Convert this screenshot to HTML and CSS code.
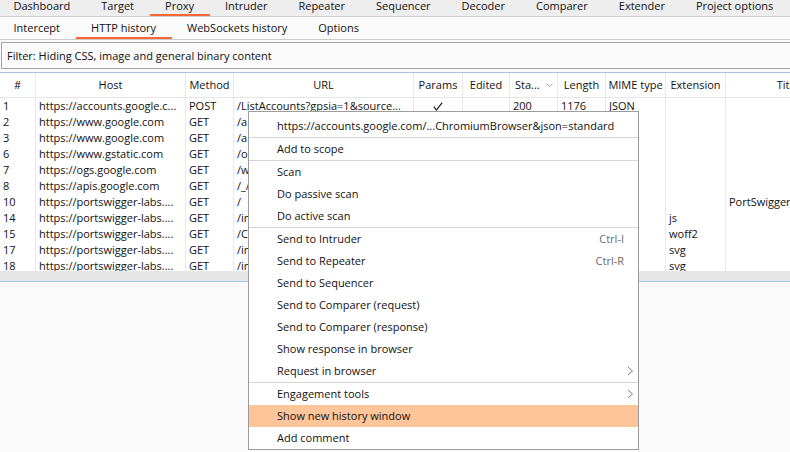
FILE: index.html
```html
<!DOCTYPE html>
<html>
<head>
<meta charset="utf-8">
<title>Proxy - HTTP history</title>
<link rel="stylesheet" href="styles.css">
</head>
<body>
<div class="app">
  <nav class="tabs main-tabs">
    <span class="tab">Dashboard</span>
    <span class="tab">Target</span>
    <span class="tab active">Proxy</span>
    <span class="tab">Intruder</span>
    <span class="tab">Repeater</span>
    <span class="tab">Sequencer</span>
    <span class="tab">Decoder</span>
    <span class="tab">Comparer</span>
    <span class="tab">Extender</span>
    <span class="tab">Project options</span>
  </nav>
  <nav class="tabs sub-tabs">
    <span class="tab">Intercept</span>
    <span class="tab active">HTTP history</span>
    <span class="tab">WebSockets history</span>
    <span class="tab">Options</span>
  </nav>
  <div class="filter">Filter: Hiding CSS, image and general binary content</div>
  <div class="history">
    <div class="row head">
      <div class="cell">#</div>
      <div class="cell">Host</div>
      <div class="cell">Method</div>
      <div class="cell">URL</div>
      <div class="cell">Params</div>
      <div class="cell">Edited</div>
      <div class="cell sorted"><span>Sta...</span><svg class="sort" width="7" height="4" viewBox="0 0 7 4"><path d="M0.5 0.5 L3.5 3.5 L6.5 0.5" fill="none" stroke="#a8a8a8" stroke-width="1"/></svg></div>
      <div class="cell">Length</div>
      <div class="cell">MIME type</div>
      <div class="cell">Extension</div>
      <div class="cell">Title</div>
    </div>
    <div class="row">
      <div class="cell">1</div><div class="cell">https://accounts.google.c...</div><div class="cell">POST</div><div class="cell">/ListAccounts?gpsia=1&amp;source...</div>
      <div class="cell check"><svg width="10" height="9" viewBox="0 0 10 9"><path d="M0.8 4.6 L3.4 8 L9.2 0.6" fill="none" stroke="#1a1a1a" stroke-width="1.2"/></svg></div>
      <div class="cell"></div><div class="cell">200</div><div class="cell">1176</div><div class="cell">JSON</div><div class="cell"></div><div class="cell"></div>
    </div>
    <div class="row">
      <div class="cell">2</div><div class="cell">https://www.google.com</div><div class="cell">GET</div><div class="cell">/a</div>
      <div class="cell"></div><div class="cell"></div><div class="cell"></div><div class="cell"></div><div class="cell"></div><div class="cell"></div><div class="cell"></div>
    </div>
    <div class="row">
      <div class="cell">3</div><div class="cell">https://www.google.com</div><div class="cell">GET</div><div class="cell">/a</div>
      <div class="cell"></div><div class="cell"></div><div class="cell"></div><div class="cell"></div><div class="cell"></div><div class="cell"></div><div class="cell"></div>
    </div>
    <div class="row">
      <div class="cell">6</div><div class="cell">https://www.gstatic.com</div><div class="cell">GET</div><div class="cell">/o</div>
      <div class="cell"></div><div class="cell"></div><div class="cell"></div><div class="cell"></div><div class="cell"></div><div class="cell"></div><div class="cell"></div>
    </div>
    <div class="row">
      <div class="cell">7</div><div class="cell">https://ogs.google.com</div><div class="cell">GET</div><div class="cell">/w</div>
      <div class="cell"></div><div class="cell"></div><div class="cell"></div><div class="cell"></div><div class="cell"></div><div class="cell"></div><div class="cell"></div>
    </div>
    <div class="row">
      <div class="cell">8</div><div class="cell">https://apis.google.com</div><div class="cell">GET</div><div class="cell">/_/</div>
      <div class="cell"></div><div class="cell"></div><div class="cell"></div><div class="cell"></div><div class="cell"></div><div class="cell"></div><div class="cell"></div>
    </div>
    <div class="row">
      <div class="cell">10</div><div class="cell">https://portswigger-labs....</div><div class="cell">GET</div><div class="cell">/</div>
      <div class="cell"></div><div class="cell"></div><div class="cell"></div><div class="cell"></div><div class="cell"></div><div class="cell"></div><div class="cell">PortSwigger Labs</div>
    </div>
    <div class="row">
      <div class="cell">14</div><div class="cell">https://portswigger-labs....</div><div class="cell">GET</div><div class="cell">/im</div>
      <div class="cell"></div><div class="cell"></div><div class="cell"></div><div class="cell"></div><div class="cell"></div><div class="cell">js</div><div class="cell"></div>
    </div>
    <div class="row">
      <div class="cell">15</div><div class="cell">https://portswigger-labs....</div><div class="cell">GET</div><div class="cell">/C</div>
      <div class="cell"></div><div class="cell"></div><div class="cell"></div><div class="cell"></div><div class="cell"></div><div class="cell">woff2</div><div class="cell"></div>
    </div>
    <div class="row">
      <div class="cell">17</div><div class="cell">https://portswigger-labs....</div><div class="cell">GET</div><div class="cell">/im</div>
      <div class="cell"></div><div class="cell"></div><div class="cell"></div><div class="cell"></div><div class="cell"></div><div class="cell">svg</div><div class="cell"></div>
    </div>
    <div class="row">
      <div class="cell">18</div><div class="cell">https://portswigger-labs....</div><div class="cell">GET</div><div class="cell">/im</div>
      <div class="cell"></div><div class="cell"></div><div class="cell"></div><div class="cell"></div><div class="cell"></div><div class="cell">svg</div><div class="cell"></div>
    </div>
  </div>
  <div class="hscroll"></div>
  <div class="lower"></div>

  <div class="menu">
    <div class="item"><span class="label">https://accounts.google.com/...ChromiumBrowser&amp;json=standard</span></div>
    <div class="sep"></div>
    <div class="item"><span class="label">Add to scope</span></div>
    <div class="sep"></div>
    <div class="item"><span class="label">Scan</span></div>
    <div class="item"><span class="label">Do passive scan</span></div>
    <div class="item"><span class="label">Do active scan</span></div>
    <div class="sep"></div>
    <div class="item"><span class="label">Send to Intruder</span><span class="key">Ctrl-I</span></div>
    <div class="item"><span class="label">Send to Repeater</span><span class="key">Ctrl-R</span></div>
    <div class="item"><span class="label">Send to Sequencer</span></div>
    <div class="item"><span class="label">Send to Comparer (request)</span></div>
    <div class="item"><span class="label">Send to Comparer (response)</span></div>
    <div class="item"><span class="label">Show response in browser</span></div>
    <div class="item"><span class="label">Request in browser</span><svg class="arrow" width="12" height="10" viewBox="0 0 12 10"><path d="M4 1 L8.5 5 L4 9" fill="none" stroke="#7a7a7a" stroke-width="1"/></svg></div>
    <div class="sep"></div>
    <div class="item"><span class="label">Engagement tools</span><svg class="arrow" width="12" height="10" viewBox="0 0 12 10"><path d="M4 1 L8.5 5 L4 9" fill="none" stroke="#7a7a7a" stroke-width="1"/></svg></div>
    <div class="item hot"><span class="label">Show new history window</span></div>
    <div class="item"><span class="label">Add comment</span></div>
  </div>
</div>
</body>
</html>
```
FILE: styles.css
```css
* { box-sizing: border-box; }
html, body { margin: 0; padding: 0; }
body {
  width: 790px;
  height: 452px;
  overflow: hidden;
  background: #fafafa;
  font-family: "Open Sans", "Noto Sans", sans-serif;
  font-size: 11px;
  color: #111;
}
.app {
  position: relative;
  width: 860px;
  height: 452px;
  display: flex;
  flex-direction: column;
}
.tabs { display: flex; margin-left: -2px; }
.tab { white-space: nowrap; padding: 0 16px; }

.main-tabs {
  height: 17px;
  background: #eeeeee;
  border-bottom: 1px solid #d3d3d3;
}
.main-tabs .tab { height: 16px; line-height: 11px; padding: 0 15.5px; }
.main-tabs .tab.active { border-bottom: 2px solid #ff6633; }

.sub-tabs {
  height: 23px;
  background: #fafafa;
  border-bottom: 1px solid #cbcbcb;
}
.sub-tabs .tab { height: 22px; line-height: 19px; padding: 1px 15.5px 0; }
.sub-tabs .tab.active { border-bottom: 2px solid #ff6633; }

.filter {
  margin: 2px 0 3px 1px;
  height: 27px;
  border: 1px solid #a6a6a6;
  padding-left: 5px;
  line-height: 25px;
  background: #fafafa;
  white-space: nowrap;
}

.history {
  height: 199px;
  border-top: 1px solid #a6c4e4;
  background: #fff;
  overflow: hidden;
}
.row {
  display: grid;
  grid-template-columns: 36px 150px 48px 180px 49px 47px 48px 48px 60px 60px 124px;
}
.cell {
  border-right: 1px solid #e9e9e9;
  padding: 0 3px;
  white-space: nowrap;
  overflow: hidden;
  height: 16px;
  line-height: 16px;
}
.head { border-bottom: 1px solid #e6e6e6; }
.head .cell { height: 24px; line-height: 24px; text-align: center; padding: 0 2px; }
.head .sorted { display: flex; align-items: center; text-align: left; padding: 0 4px 0 5px; }
.head .sorted .sort { margin-left: auto; }
.check { display: flex; align-items: center; justify-content: center; }

.hscroll {
  height: 11px;
  background: #e6e6e6;
  border-bottom: 1px solid #a6c4e4;
}
.lower { flex: 1; background: #fafafa; }

.menu {
  position: absolute;
  left: 248px;
  top: 111px;
  width: 391px;
  background: #fff;
  border: 1px solid #9c9c9c;
  padding-top: 3px;
}
.item {
  display: flex;
  align-items: center;
  height: 22px;
  line-height: 22px;
  padding: 0 2px 0 28px;
  white-space: nowrap;
}
.item .label { flex: 1; }
.item .key { color: #6b6b6b; margin-right: 12px; }
.item .arrow { margin-left: auto; }
.item.hot { background: #fec59a; }
.sep { height: 1px; background: #d5d5d5; }
```
